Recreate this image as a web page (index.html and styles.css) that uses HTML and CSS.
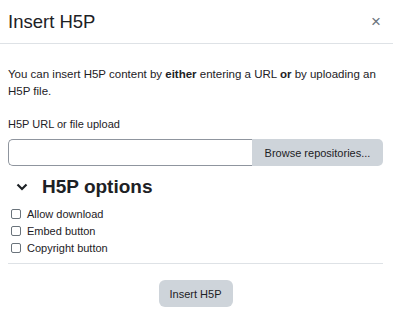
FILE: index.html
```html
<!DOCTYPE html>
<html>
<head>
<meta charset="utf-8">
<link rel="stylesheet" href="styles.css">
</head>
<body>
<div class="modal">
  <div class="modal-header">
    <h1 class="title">Insert H5P</h1>
    <span class="close">&times;</span>
  </div>
  <div class="modal-body">
    <p class="intro">You can insert H5P content by <b>either</b> entering a URL <b>or</b> by uploading an H5P file.</p>
    <div class="label">H5P URL or file upload</div>
    <div class="input-group">
      <div class="input"></div>
      <div class="browse">Browse repositories...</div>
    </div>
    <div class="options-head">
      <svg class="chev" width="12" height="8" viewBox="0 0 12 8"><path d="M1.5 1.5 L6 6 L10.5 1.5" fill="none" stroke="#1d2125" stroke-width="2.2"/></svg>
      <span>H5P options</span>
    </div>
    <div class="checks">
      <label class="check"><span class="box"></span>Allow download</label>
      <label class="check"><span class="box"></span>Embed button</label>
      <label class="check"><span class="box"></span>Copyright button</label>
    </div>
    <div class="footer">
      <div class="btn">Insert H5P</div>
    </div>
  </div>
</div>
</body>
</html>
```
FILE: styles.css
```css
html, body {
  margin: 0;
  padding: 0;
  background: #fff;
}
body {
  font-family: "Liberation Sans", Arial, sans-serif;
  color: #1d2125;
  width: 393px;
  height: 318px;
  overflow: hidden;
}
.modal-header {
  display: flex;
  align-items: center;
  justify-content: space-between;
  height: 43px;
  border-bottom: 1px solid #dee2e6;
  padding: 0 12px 0 8px;
}
.title {
  margin: 0;
  font-weight: 400;
  font-size: 18.5px;
  padding-top: 1px;
}
.close {
  color: #6a737b;
  font-size: 17px;
  line-height: 1;
}
.modal-body {
  padding: 0 10px 0 8px;
}
.intro {
  margin: 0;
  padding-top: 22px;
  font-size: 11.5px;
  line-height: 16.5px;
}
.label {
  margin-top: 17px;
  font-size: 11px;
  line-height: 16px;
}
.input-group {
  display: flex;
  margin-top: 7px;
  height: 27px;
}
.input {
  flex: 1;
  border: 1px solid #8f959e;
  border-right: none;
  border-radius: 5px 0 0 5px;
  box-sizing: border-box;
}
.browse {
  width: 131px;
  background: #ced4da;
  border-radius: 0 5px 5px 0;
  font-size: 11px;
  display: flex;
  align-items: center;
  justify-content: center;
}
.options-head {
  display: flex;
  align-items: center;
  margin-top: 10px;
  height: 22px;
  padding-left: 8px;
}
.chev {
  margin-right: 14px;
}
.options-head span {
  font-weight: 700;
  font-size: 19px;
}
.checks {
  margin-top: 7px;
  padding-left: 3px;
  border-bottom: 1px solid #dee2e6;
  padding-bottom: 7px;
}
.check {
  display: flex;
  align-items: center;
  font-size: 11px;
  height: 17px;
}
.box {
  width: 8px;
  height: 8px;
  border: 1px solid #6a737b;
  border-radius: 2px;
  margin-right: 6px;
}
.footer {
  display: flex;
  justify-content: center;
  padding-top: 16px;
}
.btn {
  width: 74px;
  height: 27px;
  background: #ced4da;
  border-radius: 6px;
  font-size: 11px;
  display: flex;
  align-items: center;
  justify-content: center;
}
```
